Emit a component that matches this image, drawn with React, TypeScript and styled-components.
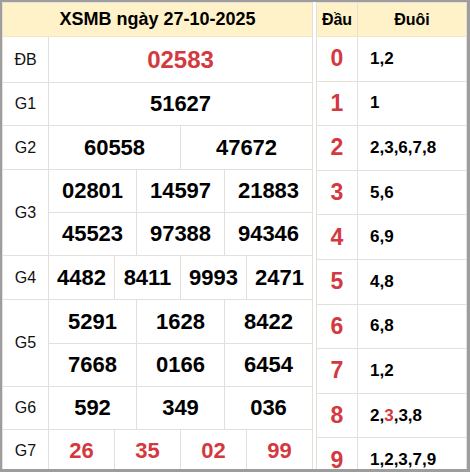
import React from "react";
import styled, { createGlobalStyle } from "styled-components";

const Global = createGlobalStyle`
  html, body { margin: 0; padding: 0; height: 100%; }
  body { background: #9d9d9d; font-family: "Liberation Sans", Arial, sans-serif; }
  #root { height: 100%; }
`;

const RED = "#d3393e";
const LINE = "#e4e0d9";
const CREAM = "#fff2c8";

const Frame = styled.div`
  margin: 2px 0 0 2px;
  width: 465px;
  height: 467px;
  overflow: hidden;
  background: #fff;
  display: flex;
  align-items: flex-start;
  gap: 3px;
`;

const Table = styled.div<{ $w: number }>`
  width: ${(p) => p.$w}px;
  flex: none;
  box-sizing: border-box;
  border: 1px solid ${LINE};
  display: flex;
  flex-direction: column;
`;

const Header = styled.div`
  height: 34px;
  box-sizing: border-box;
  background: ${CREAM};
  border-bottom: 1px solid #f1e6c6;
  display: flex;
  align-items: center;
  justify-content: center;
  font-weight: bold;
  font-size: 18px;
  color: #000;
`;

const Row = styled.div`
  display: flex;
  border-bottom: 1px solid ${LINE};
`;

const Label = styled.div`
  width: 45px;
  flex: none;
  border-right: 1px solid ${LINE};
  display: flex;
  align-items: center;
  justify-content: center;
  font-size: 16px;
  color: #111;
`;

const Body = styled.div`
  flex: 1;
  display: flex;
  flex-direction: column;
`;

const SubRow = styled.div<{ $h: number }>`
  display: flex;
  height: ${(p) => p.$h}px;
  & + & { border-top: 1px solid ${LINE}; }
`;

const Cell = styled.div<{ $red?: boolean; $big?: boolean }>`
  flex: 1;
  display: flex;
  align-items: center;
  justify-content: center;
  font-weight: bold;
  font-size: ${(p) => (p.$big ? 24 : 22)}px;
  color: ${(p) => (p.$red ? RED : "#000")};
  & + & { border-left: 1px solid ${LINE}; }
`;

const HeadRow = styled.div`
  display: flex;
  height: 34px;
  box-sizing: border-box;
  background: ${CREAM};
  border-bottom: 1px solid #f1e6c6;
  font-weight: bold;
  font-size: 16px;
`;

const HeadCell = styled.div<{ $w?: number }>`
  ${(p) => (p.$w ? `width: ${p.$w}px; flex: none;` : "flex: 1;")}
  display: flex;
  align-items: center;
  justify-content: center;
  & + & { border-left: 1px solid ${LINE}; }
`;

const LotoRow = styled.div`
  display: flex;
  height: 44.6px;
  box-sizing: border-box;
  border-bottom: 1px solid ${LINE};
  flex: none;
`;

const Head = styled.div`
  width: 40px;
  flex: none;
  border-right: 1px solid ${LINE};
  display: flex;
  align-items: center;
  justify-content: center;
  font-weight: bold;
  font-size: 23px;
  color: ${RED};
`;

const Tail = styled.div`
  flex: 1;
  display: flex;
  align-items: center;
  padding-left: 12px;
  font-weight: bold;
  font-size: 17px;
  color: #000;
`;

const Hl = styled.span`
  color: ${RED};
`;

type Prize = { label: string; lines: string[][]; h: number[]; red?: boolean; big?: boolean };

const prizes: Prize[] = [
  { label: "ĐB", lines: [["02583"]], h: [45], red: true, big: true },
  { label: "G1", lines: [["51627"]], h: [42] },
  { label: "G2", lines: [["60558", "47672"]], h: [43] },
  { label: "G3", lines: [["02801", "14597", "21883"], ["45523", "97388", "94346"]], h: [42, 42] },
  { label: "G4", lines: [["4482", "8411", "9993", "2471"]], h: [43] },
  { label: "G5", lines: [["5291", "1628", "8422"], ["7668", "0166", "6454"]], h: [43, 42] },
  { label: "G6", lines: [["592", "349", "036"]], h: [42] },
  { label: "G7", lines: [["26", "35", "02", "99"]], h: [42], red: true },
];

const loto: { d: string; t: React.ReactNode }[] = [
  { d: "0", t: "1,2" },
  { d: "1", t: "1" },
  { d: "2", t: "2,3,6,7,8" },
  { d: "3", t: "5,6" },
  { d: "4", t: "6,9" },
  { d: "5", t: "4,8" },
  { d: "6", t: "6,8" },
  { d: "7", t: "1,2" },
  { d: "8", t: <>2,<Hl>3</Hl>,3,8</> },
  { d: "9", t: "1,2,3,7,9" },
];

export default function App() {
  return (
    <>
      <Global />
      <Frame>
        <Table $w={311}>
          <Header>XSMB ngày 27-10-2025</Header>
          {prizes.map((p) => (
            <Row key={p.label}>
              <Label>{p.label}</Label>
              <Body>
                {p.lines.map((line, i) => (
                  <SubRow key={i} $h={p.h[i]}>
                    {line.map((n, j) => (
                      <Cell key={j} $red={p.red} $big={p.big}>
                        {n}
                      </Cell>
                    ))}
                  </SubRow>
                ))}
              </Body>
            </Row>
          ))}
        </Table>
        <Table $w={151}>
          <HeadRow>
            <HeadCell $w={40}>Đầu</HeadCell>
            <HeadCell>Đuôi</HeadCell>
          </HeadRow>
          {loto.map((r) => (
            <LotoRow key={r.d}>
              <Head>{r.d}</Head>
              <Tail>{r.t}</Tail>
            </LotoRow>
          ))}
        </Table>
      </Frame>
    </>
  );
}
